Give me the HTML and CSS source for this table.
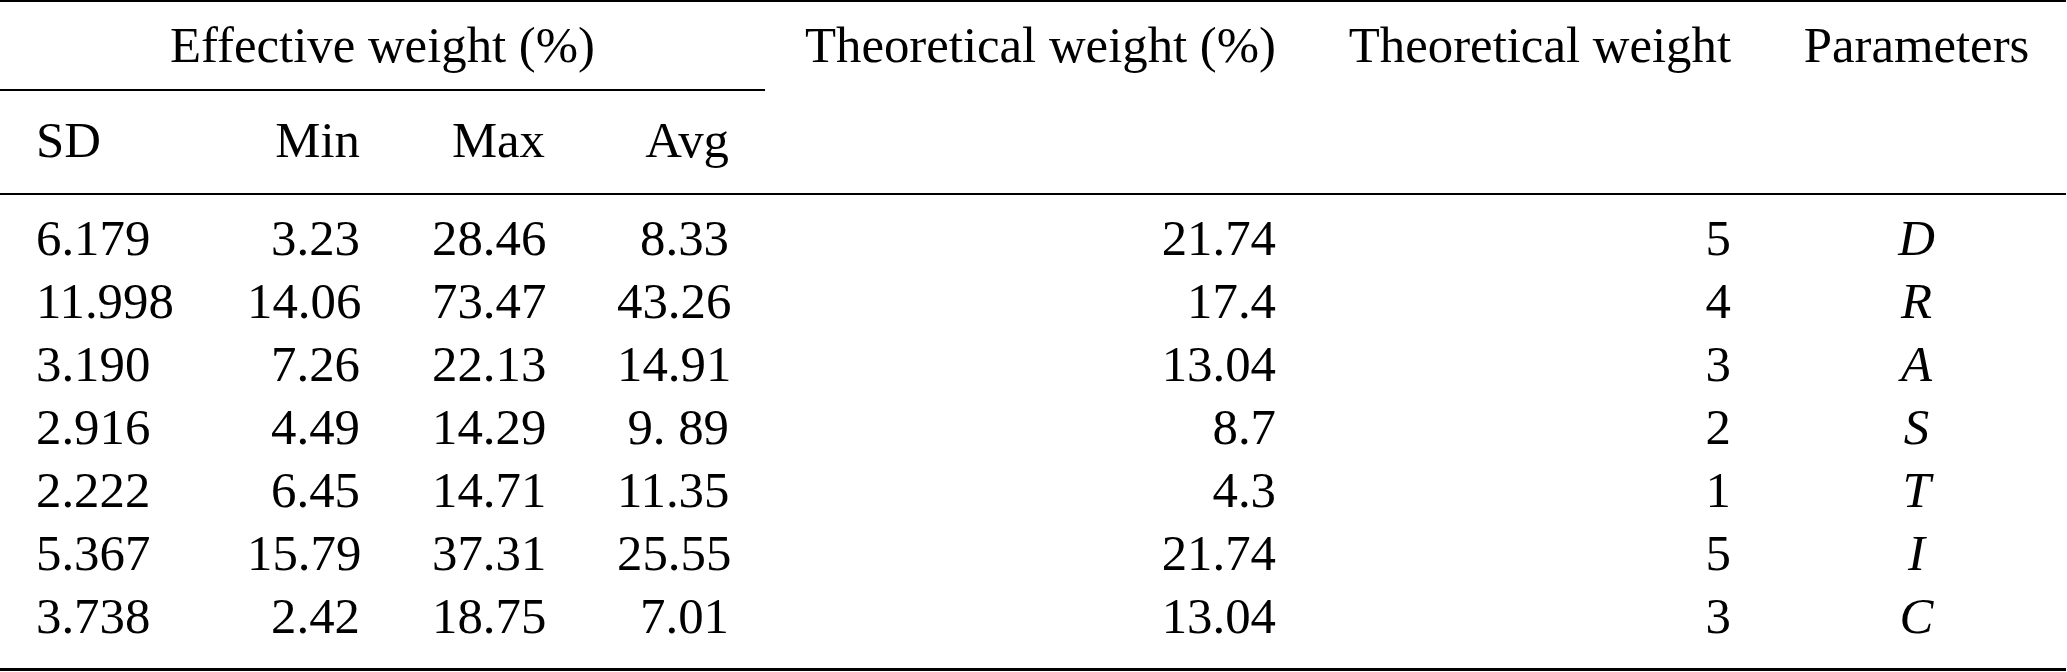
FILE: index.html
```html
<!DOCTYPE html>
<html lang="en">
<head>
<meta charset="utf-8">
<title>Weights table</title>
<link rel="stylesheet" href="styles.css">
</head>
<body>
<table class="wtable">
  <colgroup>
    <col class="c-sd"><col class="c-min"><col class="c-max"><col class="c-avg">
    <col class="c-twp"><col class="c-tw"><col class="c-par">
  </colgroup>
  <thead>
    <tr class="hrow1">
      <th colspan="4" class="group">Effective weight (%)</th>
      <th rowspan="2" class="span r">Theoretical weight (%)</th>
      <th rowspan="2" class="span r">Theoretical weight</th>
      <th rowspan="2" class="span c">Parameters</th>
    </tr>
    <tr class="hrow2">
      <th class="l">SD</th>
      <th class="r">Min</th>
      <th class="r">Max</th>
      <th class="r">Avg</th>
    </tr>
  </thead>
  <tbody>
    <tr><td class="l">6.179</td><td class="r">3.23</td><td class="r">28.46</td><td class="r">8.33</td><td class="r">21.74</td><td class="r">5</td><td class="c it">D</td></tr>
    <tr><td class="l">11.998</td><td class="r">14.06</td><td class="r">73.47</td><td class="r">43.26</td><td class="r">17.4</td><td class="r">4</td><td class="c it">R</td></tr>
    <tr><td class="l">3.190</td><td class="r">7.26</td><td class="r">22.13</td><td class="r">14.91</td><td class="r">13.04</td><td class="r">3</td><td class="c it">A</td></tr>
    <tr><td class="l">2.916</td><td class="r">4.49</td><td class="r">14.29</td><td class="r">9. 89</td><td class="r">8.7</td><td class="r">2</td><td class="c it">S</td></tr>
    <tr><td class="l">2.222</td><td class="r">6.45</td><td class="r">14.71</td><td class="r">11.35</td><td class="r">4.3</td><td class="r">1</td><td class="c it">T</td></tr>
    <tr><td class="l">5.367</td><td class="r">15.79</td><td class="r">37.31</td><td class="r">25.55</td><td class="r">21.74</td><td class="r">5</td><td class="c it">I</td></tr>
    <tr><td class="l">3.738</td><td class="r">2.42</td><td class="r">18.75</td><td class="r">7.01</td><td class="r">13.04</td><td class="r">3</td><td class="c it">C</td></tr>
  </tbody>
</table>
</body>
</html>
```
FILE: styles.css
```css
html, body {
  margin: 0;
  padding: 0;
  background: #fff;
}

body {
  font-family: "Liberation Serif", "Times New Roman", serif;
  font-size: 50.8px;
  color: #000;
}

.wtable {
  width: 2066px;
  table-layout: fixed;
  border-collapse: separate;
  border-spacing: 0;
  border-top: 2px solid #000;
  border-bottom: 3px solid #000;
}

.c-sd  { width: 211px; }
.c-min { width: 185px; }
.c-max { width: 185px; }
.c-avg { width: 184px; }
.c-twp { width: 547px; }
.c-tw  { width: 455px; }
.c-par { width: 299px; }

.wtable th,
.wtable td {
  font-weight: normal;
  line-height: 63px;
  padding: 0 36px;
  white-space: nowrap;
  vertical-align: top;
}

.wtable .hrow1 th {
  padding-top: 12px;
}

.wtable .group {
  text-align: center;
  padding-bottom: 12px;
  border-bottom: 2px solid #000;
}

.wtable .span {
  border-bottom: 2px solid #000;
}

.wtable .hrow2 th {
  padding-top: 18px;
  padding-bottom: 21px;
  border-bottom: 2px solid #000;
}

.wtable tbody tr:first-child td {
  padding-top: 12px;
}

.wtable tbody tr:last-child td {
  padding-bottom: 20px;
}

.l { text-align: left; }
.r { text-align: right; }
.c { text-align: center; }
.it { font-style: italic; }
```
